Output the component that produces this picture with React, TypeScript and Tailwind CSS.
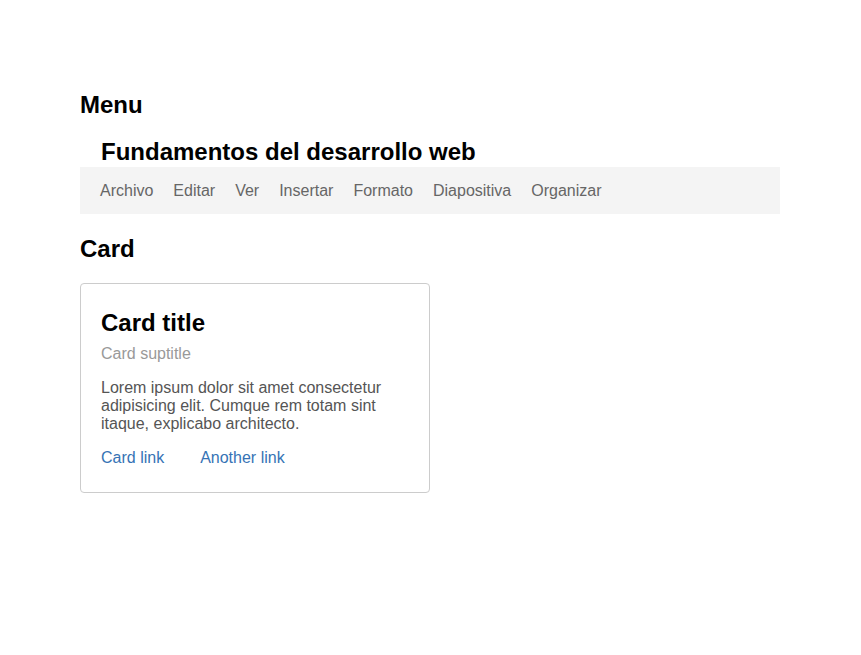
const menuItems = ["Archivo", "Editar", "Ver", "Insertar", "Formato", "Diapositiva", "Organizar"];

export default function App() {
  return (
    <div className="min-h-screen bg-white font-['Liberation_Sans',Arial,sans-serif] text-black">
      <div className="w-[700px] ml-[80px] pt-[91px]">
        <h2 className="text-[24px] leading-[28px] font-bold">Menu</h2>

        <h2 className="mt-[19px] pl-[21px] text-[24px] leading-[28px] font-bold">
          Fundamentos del desarrollo web
        </h2>
        <nav className="mt-[1px] h-[47px] bg-[#f4f4f4] flex items-center pl-[20px] gap-[20px]">
          {menuItems.map((item) => (
            <span key={item} className="text-[16px] leading-[18px] text-[#666]">
              {item}
            </span>
          ))}
        </nav>

        <h2 className="mt-[21px] text-[24px] leading-[28px] font-bold">Card</h2>

        <div className="mt-[20px] w-[350px] border border-[#ccc] rounded-[4px] px-[20px] pt-[20px] pb-[25px]">
          <h3 className="mt-[5px] text-[24px] leading-[28px] font-bold">Card title</h3>
          <p className="mt-[8px] text-[16px] leading-[18px] text-[#999]">Card suptitle</p>
          <p className="mt-[16px] text-[16px] leading-[18px] text-[#555]">
            Lorem ipsum dolor sit amet consectetur adipisicing elit. Cumque rem totam sint itaque, explicabo architecto.
          </p>
          <div className="mt-[16px] flex gap-[36px] text-[16px] leading-[18px] text-[#3673b5]">
            <a href="#">Card link</a>
            <a href="#">Another link</a>
          </div>
        </div>
      </div>
    </div>
  );
}
